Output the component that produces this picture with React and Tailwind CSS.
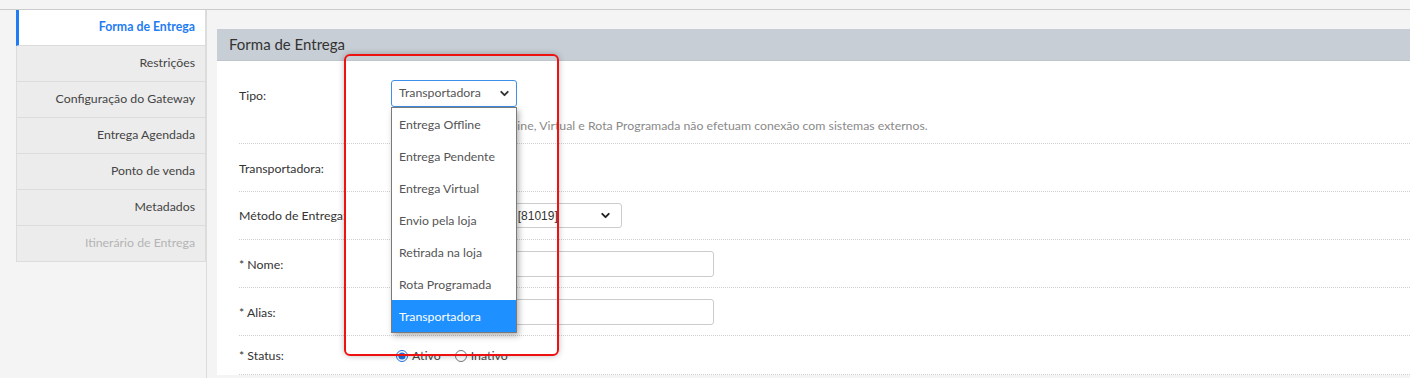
import React from 'react';
import { ChevronDown } from 'lucide-react';

const menu = [
  { label: 'Forma de Entrega', active: true },
  { label: 'Restrições' },
  { label: 'Configuração do Gateway' },
  { label: 'Entrega Agendada' },
  { label: 'Ponto de venda' },
  { label: 'Metadados' },
  { label: 'Itinerário de Entrega', disabled: true },
];

const options = [
  'Entrega Offline',
  'Entrega Pendente',
  'Entrega Virtual',
  'Envio pela loja',
  'Retirada na loja',
  'Rota Programada',
  'Transportadora',
];

const Row = ({ label, children, className = '' }) => (
  <div className={`ml-[22px] flex border-b border-dotted border-[#cfcfcf] ${className}`}>
    <div className="w-[152px] shrink-0 text-[12.3px] text-[#333]">{label}</div>
    <div className="flex-1">{children}</div>
  </div>
);

const App = () => {
  return (
    <div
      className="relative h-[378px] w-[1410px] overflow-hidden bg-[#f4f4f4]"
      style={{ fontFamily: 'Lato, "Noto Sans", sans-serif' }}
    >
      <div className="mt-[9px] flex border-t border-[#cccccc]">
        <div className="w-[16px] shrink-0" />
        <div className="w-[190px] shrink-0 self-start border-r border-[#dcdcdc]">
          {menu.map((m) => (
            <div
              key={m.label}
              className={`flex h-[36px] items-center justify-end border-b pr-[10px] text-[12.3px] ${
                m.active
                  ? 'border-[#dcdcdc] border-l-[3px] border-l-[#1f7cf2] bg-white font-bold text-[#1f7cf2]'
                  : 'border-[#dcdcdc] border-l border-l-[#dcdcdc] bg-[#ececec]'
              } ${m.disabled ? 'text-[#b4b4b4]' : m.active ? '' : 'text-[#444]'}`}
            >
              {m.label}
            </div>
          ))}
        </div>
        <div className="h-[370px] w-0 border-l border-[#dcdcdc]" />
        <div className="flex-1 pl-[10px] pt-[19px]">
          <div className="bg-white">
            <div className="flex h-[32px] items-center border-b border-[#bfc5cc] bg-[#c8ced5] pl-[12px] text-[15px] text-[#333]">
              Forma de Entrega
            </div>
            <div>
              <Row label={<div className="pt-[26px]">Tipo:</div>} className="h-[83px]">
                <div className="pt-[19px]">
                  <div className="flex h-[27px] w-[126px] items-center justify-between rounded-[3px] border border-[#3d8fe8] pl-[7px] pr-[5px] text-[12.3px] text-[#555]">
                    <span>Transportadora</span>
                    <ChevronDown size={13} strokeWidth={3.5} className="text-[#333]" />
                  </div>
                  <div className="mt-[10px] flex items-center gap-[3px] text-[12.3px] text-[#8a8a8a]">
                    <span className="text-[9px] text-[#7fb03a]">▲</span>
                    <span>Tipos de Entrega Offline, Virtual e Rota Programada não efetuam conexão com sistemas externos.</span>
                  </div>
                </div>
              </Row>
              <Row label={<div className="pt-[3px]">Transportadora:</div>} className="h-[48px] items-center">
                <div />
              </Row>
              <Row label={<div className="pt-[2px]">Método de Entrega:</div>} className="h-[48px] items-center">
                <div
                  className="flex h-[25px] w-[231px] items-center justify-between rounded-[3px] border border-[#cccccc] pl-[9px] pr-[9px] text-[12px] text-[#333]"
                  style={{ fontFamily: '"Liberation Sans", Arial, sans-serif' }}
                >
                  <span>Correios - SEDEX 10 [81019]</span>
                  <ChevronDown size={13} strokeWidth={3.5} className="text-[#222]" />
                </div>
              </Row>
              <Row label={<div className="pt-[3px]">* Nome:</div>} className="h-[48px] items-center">
                <div className="h-[26px] w-[323px] rounded-[3px] border border-[#cccccc]" />
              </Row>
              <Row label={<div className="pt-[3px]">* Alias:</div>} className="h-[48px] items-center">
                <div className="h-[26px] w-[323px] rounded-[3px] border border-[#cccccc]" />
              </Row>
              <Row label={<div className="pt-[3px]">* Status:</div>} className="h-[39px] items-center">
                <div className="flex items-center pt-[2px] text-[12.3px] text-[#444]">
                  <label className="ml-[5px] flex items-center gap-[4px]">
                    <input type="radio" name="st" defaultChecked className="m-0 h-[12px] w-[12px] accent-[#1f6fe0]" />
                    Ativo
                  </label>
                  <label className="ml-[14px] flex items-center gap-[4px]">
                    <input type="radio" name="st" className="m-0 h-[12px] w-[12px]" />
                    Inativo
                  </label>
                </div>
              </Row>
            </div>
          </div>
        </div>
      </div>

      <div className="absolute left-[391px] top-[107px] w-[126px] border border-[#7a7a7a] bg-white shadow-[2px_3px_6px_rgba(0,0,0,0.3)]">
        {options.map((o) => (
          <div
            key={o}
            className={`flex h-[32px] items-center pl-[7px] pt-[3px] text-[12.3px] ${
              o === 'Transportadora' ? 'bg-[#1e90ff] text-white' : 'text-[#555]'
            }`}
          >
            {o}
          </div>
        ))}
      </div>

      <div className="pointer-events-none absolute left-[344px] top-[54px] h-[302px] w-[215px] rounded-[6px] border-2 border-[#ee1111] shadow-[0_0_6px_rgba(0,0,0,0.25)]" />
    </div>
  );
};

export default App;
